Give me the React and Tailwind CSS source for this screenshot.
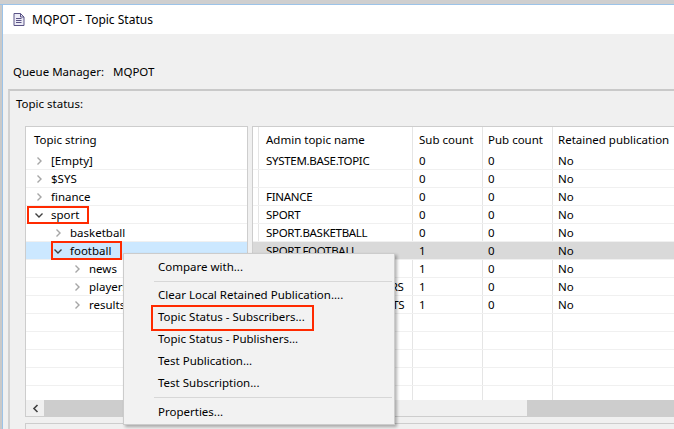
import React from "react";

const treeRows = [
  { depth: 0, label: "[Empty]" },
  { depth: 0, label: "$SYS" },
  { depth: 0, label: "finance" },
  { depth: 0, label: "sport", expanded: true },
  { depth: 1, label: "basketball" },
  { depth: 1, label: "football", expanded: true, selected: true },
  { depth: 2, label: "news" },
  { depth: 2, label: "players" },
  { depth: 2, label: "results" },
];

const tableRows = [
  ["SYSTEM.BASE.TOPIC", "0", "0", "No"],
  ["", "0", "0", "No"],
  ["FINANCE", "0", "0", "No"],
  ["SPORT", "0", "0", "No"],
  ["SPORT.BASKETBALL", "0", "0", "No"],
  ["SPORT.FOOTBALL", "1", "0", "No", true],
  ["SPORT.FOOTBALL.NEWS", "1", "0", "No"],
  ["SPORT.FOOTBALL.PLAYERS", "1", "0", "No"],
  ["SPORT.FOOTBALL.RESULTS", "1", "0", "No"],
];

const depthPad = { 0: "pl-[9px]", 1: "pl-[28px]", 2: "pl-[47px]" };

function Chevron({ expanded }) {
  if (expanded) {
    return (
      <svg width="10" height="8" viewBox="0 0 10 8" className="shrink-0 -ml-[1px] mr-[-1px]">
        <path d="M1.5 2.5 L5 6 L8.5 2.5" fill="none" stroke="#404040" strokeWidth="1.4" />
      </svg>
    );
  }
  return (
    <svg width="8" height="10" viewBox="0 0 8 10" className="shrink-0">
      <path d="M2.5 1.5 L6 5 L2.5 8.5" fill="none" stroke="#a6a6a6" strokeWidth="1.4" />
    </svg>
  );
}

function DocIcon() {
  return (
    <svg width="12" height="13" viewBox="0 0 12 13" className="shrink-0">
      <path d="M1 0.5 H7.5 L11 4 V12.5 H1 Z" fill="#ecebf6" stroke="#5b5486" strokeWidth="1" />
      <path d="M7.5 0.5 V4 H11" fill="none" stroke="#5b5486" strokeWidth="1" />
      <path d="M3 5.5 H8.5 M3 7.5 H8.5 M3 9.5 H8.5" stroke="#5b5486" strokeWidth="1" />
    </svg>
  );
}

function Scrollbar({ thumbClass, showArrow }) {
  return (
    <div className="h-[16px] flex bg-[#f0f0f0] shrink-0">
      {showArrow && (
        <div className="w-[18px] flex items-center justify-center shrink-0">
          <svg width="7" height="9" viewBox="0 0 7 9">
            <path d="M5.5 1 L2 4.5 L5.5 8" fill="none" stroke="#404040" strokeWidth="1.6" />
          </svg>
        </div>
      )}
      <div className={thumbClass} />
    </div>
  );
}

function MenuItem({ children }) {
  return <div className="h-[22px] flex items-center pl-[34px] whitespace-nowrap">{children}</div>;
}

function MenuSep({ h }) {
  return (
    <div className={`${h} flex items-center pl-[30px] pr-[2px]`}>
      <div className="h-[1px] w-full bg-[#d7d7d7]" />
    </div>
  );
}

export default function App() {
  const emptyTree = Array.from({ length: 8 });
  return (
    <div className="w-[674px] h-[429px] overflow-hidden relative flex flex-col bg-[#f0f0f0] text-black font-['Noto_Sans',sans-serif] text-[11.5px] leading-[16px]">
      {/* background strip */}
      <div className="h-[4px] bg-[#cfcfcf] shrink-0" />
      <div className="h-[1px] bg-[#9cc3e8] shrink-0" />
      <div className="flex flex-1 min-h-0">
        <div className="w-[2px] bg-[#c9c9c9] shrink-0" />
        <div className="w-[1px] bg-[#9cc3e8] shrink-0" />
        <div className="flex-1 flex flex-col min-w-0">
          {/* title bar */}
          <div className="h-[29px] bg-white flex items-center pl-[10px] gap-[7px] shrink-0">
            <DocIcon />
            <span className="text-[12px] mt-[1px]">MQPOT - Topic Status</span>
          </div>
          {/* content */}
          <div className="flex-1 flex flex-col min-h-0">
            <div className="mt-[30px] pl-[10px] flex gap-[9px] h-[16px]">
              <span>Queue Manager:</span>
              <span>MQPOT</span>
            </div>
            <div className="mt-[9px] ml-[5px] flex-1 flex flex-col border-t-2 border-l-2 border-t-[#c9c9c9] border-l-[#d2d2d2] min-h-0">
              <div className="pl-[6px] pt-[5px] h-[21px]">Topic status:</div>
              <div className="mt-[14px] pl-[15px] flex h-[291px] shrink-0">
                {/* tree panel */}
                <div className="w-[223px] shrink-0 border border-[#cdcdcd] bg-white flex flex-col">
                  <div className="h-[25px] pl-[8px] pt-[5px] shrink-0">Topic string</div>
                  <div className="flex-1 overflow-hidden">
                    {treeRows.map((r, i) => (
                      <div
                        key={i}
                        className={`h-[18px] flex items-center border-b border-[#f0f0f0] ${depthPad[r.depth]} ${r.selected ? "bg-[#cce8ff]" : ""}`}
                      >
                        <span className="w-[8px] flex items-center justify-center">
                          <Chevron expanded={r.expanded} />
                        </span>
                        <span className="ml-[8px] whitespace-nowrap">{r.label}</span>
                      </div>
                    ))}
                    {emptyTree.map((_, i) => (
                      <div key={i} className="h-[18px] border-b border-[#f0f0f0]" />
                    ))}
                  </div>
                  <Scrollbar showArrow thumbClass="flex-1 bg-[#cdcdcd]" />
                </div>
                <div className="w-[4px] shrink-0" />
                {/* table panel */}
                <div className="w-[440px] shrink-0 border border-[#cdcdcd] border-r-0 bg-white flex flex-col">
                  <div className="flex-1 overflow-hidden relative">
                    <div className="absolute inset-0 flex pointer-events-none">
                      <div className="w-[6px] border-r border-[#e5e5e5]" />
                      <div className="w-[154px] border-r border-[#e5e5e5]" />
                      <div className="w-[70px] border-r border-[#e5e5e5]" />
                      <div className="w-[70px] border-r border-[#e5e5e5]" />
                    </div>
                    <div className="relative">
                      <div className="h-[25px] flex pt-[5px]">
                        <div className="w-[6px]" />
                        <div className="w-[154px] pl-[7px] whitespace-nowrap">Admin topic name</div>
                        <div className="w-[70px] pl-[6px] whitespace-nowrap">Sub count</div>
                        <div className="w-[70px] pl-[5px] whitespace-nowrap">Pub count</div>
                        <div className="pl-[5px] whitespace-nowrap">Retained publication</div>
                      </div>
                      {tableRows.map((r, i) => (
                        <div
                          key={i}
                          className={`h-[18px] flex items-center border-b border-[#f0f0f0] ${r[4] ? "bg-[#d9d9d9]" : ""}`}
                        >
                          <div className="w-[6px] shrink-0" />
                          <div className="w-[154px] shrink-0 pl-[7px] pr-[2px] overflow-hidden whitespace-nowrap tracking-[-0.3px]">{r[0]}</div>
                          <div className="w-[70px] shrink-0 pl-[6px]">{r[1]}</div>
                          <div className="w-[70px] shrink-0 pl-[5px]">{r[2]}</div>
                          <div className="pl-[5px]">{r[3]}</div>
                        </div>
                      ))}
                      {emptyTree.map((_, i) => (
                        <div key={i} className="h-[18px] border-b border-[#f0f0f0]" />
                      ))}
                    </div>
                  </div>
                  <Scrollbar thumbClass="ml-[274px] flex-1 bg-[#cdcdcd]" />
                </div>
              </div>
              <div className="mt-[6px] ml-[15px] flex-1 border-t border-l border-[#cdcdcd]" />
            </div>
          </div>
        </div>
      </div>

      {/* annotation boxes */}
      <div className="absolute left-[27px] top-[206px] w-[62px] h-[18px] border-2 border-[#ff2a00]" />
      <div className="absolute left-[51px] top-[241px] w-[71px] h-[19px] border-2 border-[#ff2a00]" />

      {/* context menu */}
      <div className="absolute left-[123px] top-[253px] w-[272px] h-[172px] bg-[#f2f2f2] border border-[#cccccc] shadow-[2px_2px_3px_rgba(0,0,0,0.3)] pt-[2px]">
        <MenuItem>Compare with...</MenuItem>
        <MenuSep h="h-[6px]" />
        <MenuItem>Clear Local Retained Publication....</MenuItem>
        <MenuItem>Topic Status - Subscribers...</MenuItem>
        <MenuItem>Topic Status - Publishers...</MenuItem>
        <MenuItem>Test Publication...</MenuItem>
        <MenuItem>Test Subscription...</MenuItem>
        <MenuSep h="h-[7px]" />
        <MenuItem>Properties...</MenuItem>
      </div>
      <div className="absolute left-[151px] top-[305px] w-[163px] h-[26px] border-2 border-[#ff2a00]" />
    </div>
  );
}
